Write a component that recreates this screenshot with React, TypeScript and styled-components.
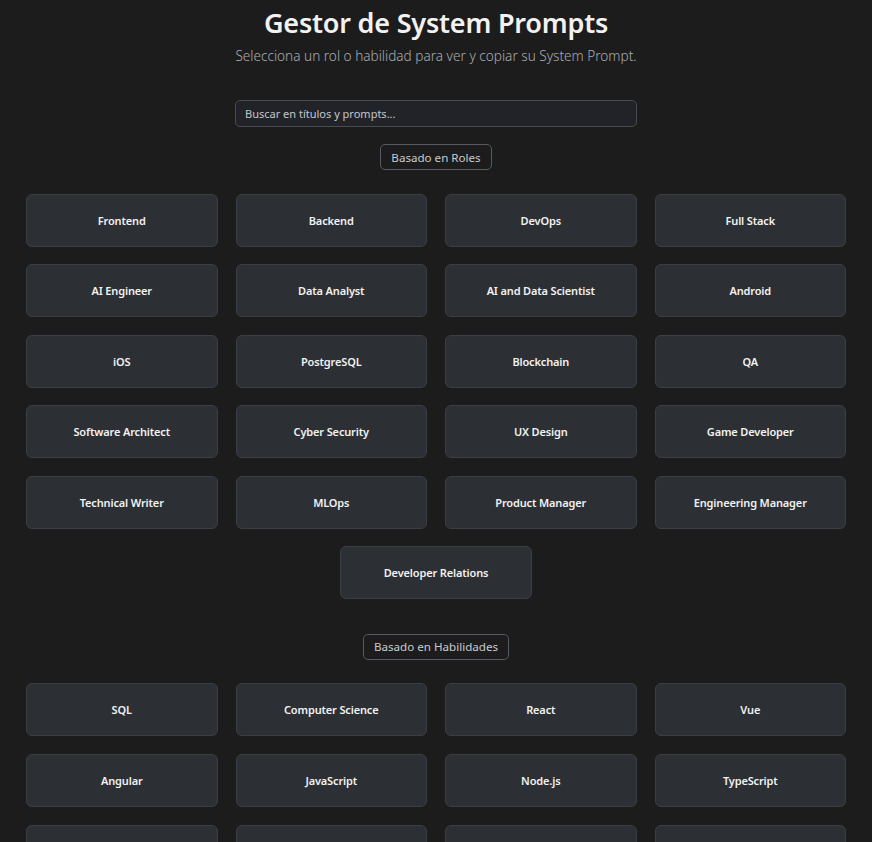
import React from "react";
import styled, { createGlobalStyle } from "styled-components";

const Global = createGlobalStyle`
  html, body { margin: 0; padding: 0; background: #1c1c1c; }
  body { font-family: "Noto Sans", "Open Sans", sans-serif; color: #e8e8e8; }
  * { box-sizing: border-box; }
`;

const Page = styled.div`
  padding: 0 26px 40px;
  display: flex;
  flex-direction: column;
  align-items: center;
`;

const Title = styled.h1`
  margin: 6px 0 0;
  font-size: 27px;
  line-height: 34px;
  font-weight: 600;
  color: #f2f2f2;
  letter-spacing: -0.2px;
`;

const Subtitle = styled.p`
  margin: 6px 0 0;
  font-size: 13.6px;
  line-height: 20px;
  font-weight: 300;
  color: #a9adb3;
`;

const Search = styled.input`
  margin-top: 34px;
  width: 402px;
  height: 27px;
  padding: 0 9px;
  border-radius: 5px;
  border: 1px solid #474b52;
  background: #212328;
  color: #e0e0e0;
  font-family: inherit;
  font-size: 11px;
  outline: none;
  &::placeholder { color: #c4c7cc; }
`;

const SectionLabel = styled.div<{ $top: number }>`
  margin-top: ${(p) => p.$top}px;
  height: 26px;
  padding: 0 10px;
  display: flex;
  align-items: center;
  border: 1px solid #565a61;
  border-radius: 5px;
  font-size: 11.6px;
  color: #c8cbd0;
`;

const Grid = styled.div`
  margin-top: 23.5px;
  width: 100%;
  display: flex;
  flex-wrap: wrap;
  justify-content: center;
  gap: 17.6px 18px;
`;

const Card = styled.button`
  width: calc((100% - 54px) / 4);
  height: 53px;
  background: #2c2f34;
  border: 1px solid #3b3e44;
  border-radius: 6px;
  color: #f2f2f2;
  font-family: inherit;
  font-size: 11px;
  font-weight: 600;
  letter-spacing: -0.15px;
  cursor: pointer;
  display: flex;
  align-items: center;
  justify-content: center;
`;

const roles = [
  "Frontend", "Backend", "DevOps", "Full Stack",
  "AI Engineer", "Data Analyst", "AI and Data Scientist", "Android",
  "iOS", "PostgreSQL", "Blockchain", "QA",
  "Software Architect", "Cyber Security", "UX Design", "Game Developer",
  "Technical Writer", "MLOps", "Product Manager", "Engineering Manager",
  "Developer Relations",
];

const skills = [
  "SQL", "Computer Science", "React", "Vue",
  "Angular", "JavaScript", "Node.js", "TypeScript",
  "Python", "System Design", "Java", "ASP.NET Core",
];

export default function App() {
  return (
    <>
      <Global />
      <Page>
        <Title>Gestor de System Prompts</Title>
        <Subtitle>Selecciona un rol o habilidad para ver y copiar su System Prompt.</Subtitle>
        <Search placeholder="Buscar en títulos y prompts..." />
        <SectionLabel $top={17}>Basado en Roles</SectionLabel>
        <Grid>
          {roles.map((r) => (
            <Card key={r}>{r}</Card>
          ))}
        </Grid>
        <SectionLabel $top={34.5}>Basado en Habilidades</SectionLabel>
        <Grid>
          {skills.map((s) => (
            <Card key={s}>{s}</Card>
          ))}
        </Grid>
      </Page>
    </>
  );
}
